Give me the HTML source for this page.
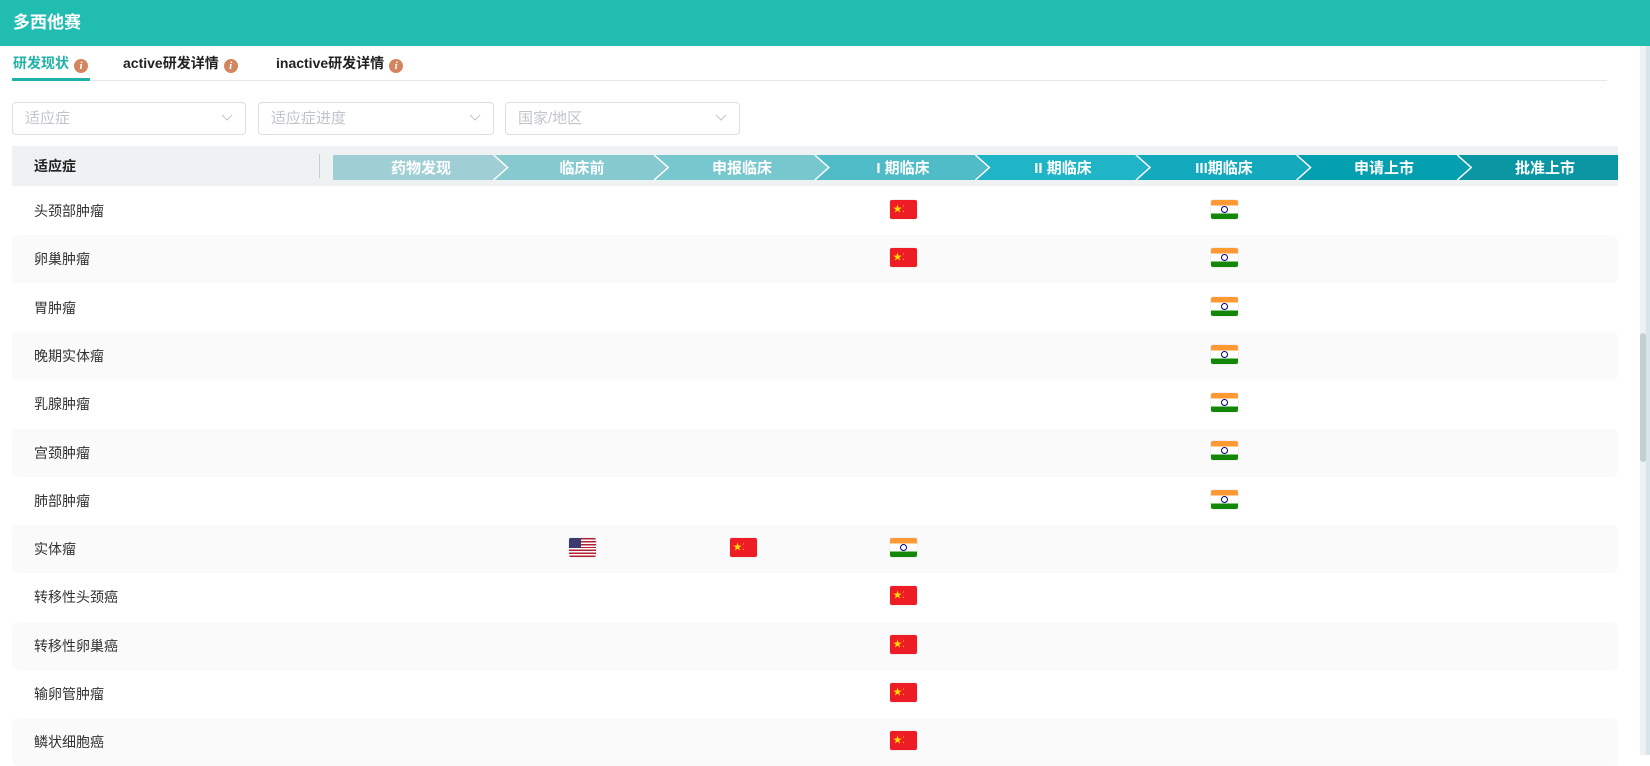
<!DOCTYPE html>
<html><head><meta charset="utf-8"><style>
*{margin:0;padding:0;box-sizing:border-box}
body{width:1650px;height:755px;overflow:hidden;background:#fff;font-family:"Liberation Sans","Noto Sans CJK SC",sans-serif;position:relative}
.hdr{position:absolute;left:0;top:0;width:1650px;height:46px;background:#20bdb0;color:#fff;font-weight:bold;font-size:17px;line-height:46px;padding-left:13px}
.tab{position:absolute;top:53px;font-size:14px;font-weight:bold;color:#222;line-height:20px;white-space:nowrap}
.ic{display:inline-block;width:14px;height:14px;border-radius:50%;background:#d4855f;color:#fff;font-size:11px;font-style:italic;font-family:"Liberation Serif",serif;text-align:center;line-height:14px;vertical-align:-1px;margin-left:5px;font-weight:bold}
.ul{position:absolute;left:12px;top:78px;width:78px;height:3px;background:#20b2a8}
.div{position:absolute;left:12px;top:80px;width:1595px;height:1px;background:#e4e7ed}
.dd{position:absolute;top:102px;height:33px;border:1px solid #dcdfe6;border-radius:4px;color:#c0c4cc;font-size:15px;line-height:31px;padding-left:12px}
.dd svg{position:absolute;right:12px;top:11px}
.th{position:absolute;left:12px;top:146px;width:1606px;height:40px;background:#eef2f3}
.th .t{position:absolute;left:22px;top:0;line-height:40px;font-size:14px;font-weight:bold;color:#222}
.th .s{position:absolute;left:307px;top:8px;width:1px;height:24px;background:#ccc}
.row{position:absolute;left:12px;width:1606px;height:48px;border-radius:6px}
.row.alt{background:#fafafa}
.row span{position:absolute;left:22px;top:0;line-height:48px;font-size:14px;color:#333}
.fl{position:absolute;width:27px;height:19px;border-radius:2px;overflow:hidden;box-shadow:0 0 1px #aaa}
.cn{background:#ee1c25;color:#ffde00;font-size:9px;line-height:19px;padding-left:3px}
.in{background:linear-gradient(#ff9933 0 30%,#fff 30% 72%,#138808 72%)}
.in::after{content:"";position:absolute;left:10px;top:6px;width:7px;height:7px;border-radius:50%;border:1.5px solid #000088;box-sizing:border-box}
.us{background:repeating-linear-gradient(#b22234 0 1.46px,#fff 1.46px 2.92px)}
.us::after{content:"";position:absolute;left:0;top:0;width:12px;height:10px;background:#3c3b6e}
.sb{position:absolute;left:1640px;top:46px;width:6px;height:709px;background:#eef1f3}
.sb2{position:absolute;left:1646px;top:46px;width:4px;height:709px;background:#d7e6ea}
.th2{position:absolute;left:1640px;top:333px;width:6px;height:129px;border-radius:3px;background:#c2d0ce}
</style></head><body>
<div class="hdr">多西他赛</div>
<div class="tab" style="left:13px;color:#20b2a8">研发现状<span class="ic">i</span></div>
<div class="tab" style="left:123px">active研发详情<span class="ic">i</span></div>
<div class="tab" style="left:276px">inactive研发详情<span class="ic">i</span></div>
<div class="div"></div><div class="ul"></div>
<div class="dd" style="left:12px;width:234px">适应症<svg width="12" height="8"><path d="M1 1L6 6L11 1" stroke="#c0c4cc" fill="none"/></svg></div>
<div class="dd" style="left:258px;width:236px">适应症进度<svg width="12" height="8"><path d="M1 1L6 6L11 1" stroke="#c0c4cc" fill="none"/></svg></div>
<div class="dd" style="left:505px;width:235px">国家/地区<svg width="12" height="8"><path d="M1 1L6 6L11 1" stroke="#c0c4cc" fill="none"/></svg></div>
<div class="th"><div class="t">适应症</div><div class="s"></div>
<svg style="position:absolute;left:321px;top:9px" width="1285" height="25" font-family="Liberation Sans,Noto Sans CJK SC,sans-serif" font-size="15" font-weight="bold" fill="#fff">
<polygon points="0,0 160.6,0 174.6,12.5 160.6,25 0,25" fill="#9fcfd4"/>
<polygon points="160.6,0 321.2,0 335.2,12.5 321.2,25 160.6,25 174.6,12.5" fill="#86cad0"/>
<polygon points="321.2,0 481.8,0 495.8,12.5 481.8,25 321.2,25 335.2,12.5" fill="#77c7cf"/>
<polygon points="481.8,0 642.4,0 656.4,12.5 642.4,25 481.8,25 495.8,12.5" fill="#4fbcc8"/>
<polygon points="642.4,0 803,0 817,12.5 803,25 642.4,25 656.4,12.5" fill="#1fb5c7"/>
<polygon points="803,0 963.6,0 977.6,12.5 963.6,25 803,25 817,12.5" fill="#14aabd"/>
<polygon points="963.6,0 1124.2,0 1138.2,12.5 1124.2,25 963.6,25 977.6,12.5" fill="#05a0b0"/>
<polygon points="1124.2,0 1285,0 1285,25 1124.2,25 1138.2,12.5" fill="#0a97a3"/>
<g stroke="#fff" stroke-width="1.5" fill="none">
<polyline points="160.6,0 174.6,12.5 160.6,25"/><polyline points="321.2,0 335.2,12.5 321.2,25"/><polyline points="481.8,0 495.8,12.5 481.8,25"/><polyline points="642.4,0 656.4,12.5 642.4,25"/><polyline points="803,0 817,12.5 803,25"/><polyline points="963.6,0 977.6,12.5 963.6,25"/><polyline points="1124.2,0 1138.2,12.5 1124.2,25"/></g>
<g text-anchor="middle"><text x="88" y="18">药物发现</text><text x="249" y="18">临床前</text><text x="409" y="18">申报临床</text><text x="570" y="18">I 期临床</text><text x="730" y="18">II 期临床</text><text x="891" y="18">III期临床</text><text x="1051" y="18">申请上市</text><text x="1212" y="18">批准上市</text></g>
</svg></div>

<div class="row" style="top:187px"><span>头颈部肿瘤</span></div>
<div class="row alt" style="top:235.3px"><span>卵巢肿瘤</span></div>
<div class="row" style="top:283.6px"><span>胃肿瘤</span></div>
<div class="row alt" style="top:331.9px"><span>晚期实体瘤</span></div>
<div class="row" style="top:380.2px"><span>乳腺肿瘤</span></div>
<div class="row alt" style="top:428.5px"><span>宫颈肿瘤</span></div>
<div class="row" style="top:476.8px"><span>肺部肿瘤</span></div>
<div class="row alt" style="top:525.1px"><span>实体瘤</span></div>
<div class="row" style="top:573.4px"><span>转移性头颈癌</span></div>
<div class="row alt" style="top:621.7px"><span>转移性卵巢癌</span></div>
<div class="row" style="top:670px"><span>输卵管肿瘤</span></div>
<div class="row alt" style="top:718.3px"><span>鳞状细胞癌</span></div>

<div class="fl cn" style="left:890px;top:200px">★⁚</div>
<div class="fl in" style="left:1211px;top:200px"></div>
<div class="fl cn" style="left:890px;top:248px">★⁚</div>
<div class="fl in" style="left:1211px;top:248px"></div>
<div class="fl in" style="left:1211px;top:297px"></div>
<div class="fl in" style="left:1211px;top:345px"></div>
<div class="fl in" style="left:1211px;top:393px"></div>
<div class="fl in" style="left:1211px;top:441px"></div>
<div class="fl in" style="left:1211px;top:490px"></div>
<div class="fl us" style="left:569px;top:538px"></div>
<div class="fl cn" style="left:730px;top:538px">★⁚</div>
<div class="fl in" style="left:890px;top:538px"></div>
<div class="fl cn" style="left:890px;top:586px">★⁚</div>
<div class="fl cn" style="left:890px;top:635px">★⁚</div>
<div class="fl cn" style="left:890px;top:683px">★⁚</div>
<div class="fl cn" style="left:890px;top:731px">★⁚</div>

<div class="sb"></div><div class="sb2"></div><div class="th2"></div>
</body></html>
